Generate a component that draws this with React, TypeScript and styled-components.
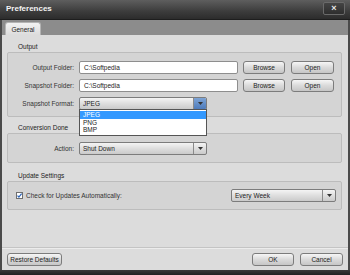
import styled, { createGlobalStyle } from 'styled-components';

const GlobalStyle = createGlobalStyle`
  html, body {
    margin: 0;
    padding: 0;
    background: #2b2b2b;
  }
  * {
    box-sizing: border-box;
  }
`;

const Window = styled.div`
  width: 350px;
  height: 275px;
  display: flex;
  flex-direction: column;
  font-family: 'Liberation Sans', Arial, sans-serif;
  font-size: 6.5px;
  color: #222;
  background: #2b2b2b;
  overflow: hidden;
`;

const TitleBar = styled.div`
  height: 20px;
  flex: none;
  display: flex;
  align-items: center;
  justify-content: space-between;
  padding: 0 5px 0 6px;
  background: linear-gradient(#5e5e5e, #3c3c3c 60%, #2c2c2c);
  border-bottom: 1px solid #1e1e1e;
`;

const Title = styled.span`
  color: #f4f4f4;
  font-weight: bold;
  font-size: 8px;
  margin-top: -2px;
`;

const CloseButton = styled.div`
  width: 22px;
  height: 13px;
  margin-top: -3px;
  border: 1px solid #6a6a6a;
  border-radius: 2px;
  display: flex;
  align-items: center;
  justify-content: center;
  color: #e8e8e8;
  font-weight: bold;
  font-size: 9px;
  background: linear-gradient(#444, #2e2e2e);
`;

const Frame = styled.div`
  flex: 1;
  display: flex;
  flex-direction: column;
  border-left: 2px solid #4a4a4a;
  border-right: 2px solid #4a4a4a;
  background: #dcdcdc;
`;

const TabStrip = styled.div`
  height: 15px;
  flex: none;
  background: #8c8c8c;
  padding: 2px 0 0 3px;
  display: flex;
  align-items: flex-end;
`;

const Tab = styled.div`
  width: 36px;
  height: 13px;
  display: flex;
  align-items: center;
  justify-content: center;
  background: linear-gradient(#f2f2f2, #dcdcdc);
  border: 1px solid #b4b4b4;
  border-bottom: none;
  border-radius: 3px 3px 0 0;
  color: #222;
`;

const Content = styled.div`
  flex: 1;
  display: flex;
  flex-direction: column;
  padding: 0 6px 0 5px;
`;

const SectionTitle = styled.div<{ $top: number }>`
  padding: ${(p) => p.$top}px 0 0 11px;
  height: ${(p) => p.$top + 10}px;
  line-height: 9px;
  color: #222;
`;

const Group = styled.div<{ $pad: string }>`
  position: relative;
  display: flex;
  flex-direction: column;
  gap: 5px;
  padding: ${(p) => p.$pad};
  background: #d4d4d4;
  border: 1px solid #bcbcbc;
  border-radius: 2px;
`;

const Row = styled.div<{ $spread?: boolean }>`
  display: flex;
  align-items: center;
  gap: 5px;
  height: 13px;
  justify-content: ${(p) => (p.$spread ? 'space-between' : 'flex-start')};
`;

const Label = styled.span`
  width: 66px;
  text-align: right;
  color: #333;
  flex: none;
`;

const TextInput = styled.div`
  width: 159px;
  height: 13px;
  display: flex;
  align-items: center;
  padding-left: 4px;
  background: #fff;
  border: 1px solid #8e8e8e;
  border-radius: 2px;
  color: #222;
`;

const Button = styled.div<{ $w: number; $ml?: number }>`
  width: ${(p) => p.$w}px;
  height: 13px;
  margin-left: ${(p) => p.$ml ?? 0}px;
  display: flex;
  align-items: center;
  justify-content: center;
  background: linear-gradient(#f6f6f6, #dadada 50%, #c6c6c6);
  border: 1px solid #7c7c7c;
  border-radius: 3px;
  color: #222;
  flex: none;
`;

const SelectWrap = styled.div`
  position: relative;
  flex: none;
`;

const SelectBox = styled.div<{ $w: number }>`
  width: ${(p) => p.$w}px;
  height: 13px;
  display: flex;
  background: linear-gradient(#f4f4f4, #dedede 50%, #cacaca);
  border: 1px solid #7c7c7c;
  border-radius: 2px;
  overflow: hidden;
`;

const SelectText = styled.div`
  flex: 1;
  display: flex;
  align-items: center;
  padding-left: 3px;
  color: #222;
`;

const ArrowBox = styled.div<{ $active?: boolean }>`
  width: 13px;
  display: flex;
  align-items: center;
  justify-content: center;
  border-left: 1px solid #8a8a8a;
  background: ${(p) =>
    p.$active ? 'linear-gradient(#7ea4d6, #4d7bbb)' : 'transparent'};
`;

const DropList = styled.div`
  position: absolute;
  top: 12px;
  left: 0;
  width: 128px;
  z-index: 5;
  background: #fff;
  border: 1px solid #555;
  padding: 1px 0;
`;

const DropItem = styled.div<{ $selected?: boolean }>`
  height: 7.5px;
  line-height: 7.5px;
  padding-left: 3px;
  background: ${(p) => (p.$selected ? '#3399ff' : 'transparent')};
  color: ${(p) => (p.$selected ? '#fff' : '#222')};
`;

const CheckLabel = styled.label`
  display: flex;
  align-items: center;
  gap: 3px;
  color: #333;
`;

const Footer = styled.div`
  flex: none;
  height: 23px;
  display: flex;
  align-items: flex-start;
  justify-content: space-between;
  padding: 5px 5px 0 5px;
  border-top: 1px solid #c4c4c4;
  box-shadow: inset 0 1px #ececec;
`;

const FooterRight = styled.div`
  display: flex;
  gap: 6px;
`;

const BottomBar = styled.div`
  height: 5px;
  flex: none;
  background: linear-gradient(#3a3a3a, #222);
`;

const Arrow = () => (
  <svg width="5" height="3" viewBox="0 0 5 3">
    <path d="M0 0 H5 L2.5 3 Z" fill="#333" />
  </svg>
);

const Select = ({
  value,
  width,
  active,
  options,
}: {
  value: string;
  width: number;
  active?: boolean;
  options?: string[];
}) => (
  <SelectWrap>
    <SelectBox $w={width}>
      <SelectText>{value}</SelectText>
      <ArrowBox $active={active}>
        <Arrow />
      </ArrowBox>
    </SelectBox>
    {options && (
      <DropList>
        {options.map((o) => (
          <DropItem key={o} $selected={o === value}>
            {o}
          </DropItem>
        ))}
      </DropList>
    )}
  </SelectWrap>
);

const CheckBox = () => (
  <svg width="7" height="7" viewBox="0 0 7 7">
    <rect x="0.5" y="0.5" width="6" height="6" fill="#fff" stroke="#6f6f6f" />
    <path d="M1.5 3.6 L2.9 5 L5.6 1.6" fill="none" stroke="#2a62b8" strokeWidth="1.2" />
  </svg>
);

export default function App() {
  return (
    <>
      <GlobalStyle />
      <Window>
        <TitleBar>
          <Title>Preferences</Title>
          <CloseButton>×</CloseButton>
        </TitleBar>
        <Frame>
          <TabStrip>
            <Tab>General</Tab>
          </TabStrip>
          <Content>
            <SectionTitle $top={7}>Output</SectionTitle>
            <Group $pad="8px 7px 6px 0">
              <Row>
                <Label>Output Folder:</Label>
                <TextInput>C:\Softpedia</TextInput>
                <Button $w={42}>Browse</Button>
                <Button $w={43} $ml={1}>
                  Open
                </Button>
              </Row>
              <Row>
                <Label>Snapshot Folder:</Label>
                <TextInput>C:\Softpedia</TextInput>
                <Button $w={42}>Browse</Button>
                <Button $w={43} $ml={1}>
                  Open
                </Button>
              </Row>
              <Row>
                <Label>Snapshot Format:</Label>
                <Select
                  value="JPEG"
                  width={128}
                  active
                  options={['JPEG', 'PNG', 'BMP']}
                />
              </Row>
            </Group>

            <SectionTitle $top={6}>Conversion Done</SectionTitle>
            <Group $pad="8px 7px 7px 0">
              <Row>
                <Label>Action:</Label>
                <Select value="Shut Down" width={128} />
              </Row>
            </Group>

            <SectionTitle $top={8}>Update Settings</SectionTitle>
            <Group $pad="7px 5px 7px 8px">
              <Row $spread>
                <CheckLabel>
                  <CheckBox />
                  Check for Updates Automatically:
                </CheckLabel>
                <Select value="Every Week" width={105} />
              </Row>
            </Group>
          </Content>
          <Footer>
            <Button $w={55}>Restore Defaults</Button>
            <FooterRight>
              <Button $w={42}>OK</Button>
              <Button $w={43}>Cancel</Button>
            </FooterRight>
          </Footer>
        </Frame>
        <BottomBar />
      </Window>
    </>
  );
}
